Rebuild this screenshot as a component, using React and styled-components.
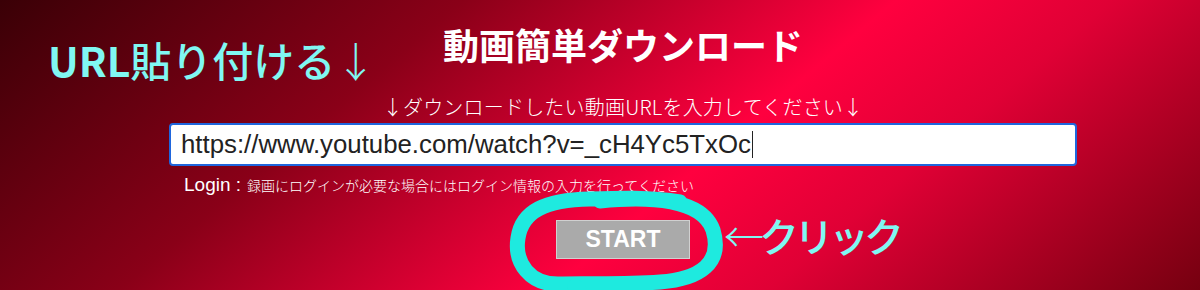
import styled, { createGlobalStyle } from "styled-components";

const GlobalStyle = createGlobalStyle`
  html, body {
    margin: 0;
    padding: 0;
  }
  body {
    font-family: "Liberation Sans", "Noto Sans CJK JP", sans-serif;
  }
`;

const Page = styled.div`
  position: relative;
  width: 1200px;
  height: 290px;
  overflow: hidden;
  background: linear-gradient(
    140deg,
    #3a0006 0%,
    #8a0018 30%,
    #ff003f 58%,
    #e00035 72%,
    #760010 100%
  );
`;

const Column = styled.main`
  display: flex;
  flex-direction: column;
  align-items: center;
  padding: 26px 0 0 46px;
`;

const Title = styled.h1`
  margin: 0;
  font-family: "Noto Sans CJK JP", sans-serif;
  font-weight: 700;
  font-size: 36px;
  line-height: 36px;
  color: #fff;
`;

const Hint = styled.p`
  margin: 34px 0 0;
  font-family: "Noto Sans CJK JP", sans-serif;
  font-weight: 300;
  font-size: 20px;
  line-height: 22px;
  letter-spacing: 0.2px;
  color: #fff;
`;

const UrlField = styled.div`
  box-sizing: border-box;
  width: 908px;
  height: 43px;
  margin-top: 5px;
  display: flex;
  align-items: center;
  padding: 0 10px;
  background: #fff;
  border: 2px solid #1f66dd;
  border-radius: 4px;
  font-family: "Liberation Sans", sans-serif;
  font-size: 25.8px;
  color: #222;
`;

const Caret = styled.span`
  display: inline-block;
  width: 1px;
  height: 27px;
  margin-left: 1px;
  background: #222;
`;

const LoginRow = styled.div`
  box-sizing: border-box;
  width: 908px;
  padding-left: 15px;
  margin-top: 8px;
  display: flex;
  align-items: baseline;
  gap: 6px;
  color: #fff;
`;

const LoginLabel = styled.span`
  font-family: "Liberation Sans", sans-serif;
  font-size: 19px;
`;

const LoginNote = styled.span`
  font-family: "Noto Sans CJK JP", sans-serif;
  font-size: 14px;
  font-weight: 300;
`;

const StartButton = styled.button`
  width: 134px;
  height: 39px;
  margin-top: 24px;
  background: #aaaaaa;
  border: 1px solid #d0d0d0;
  color: #fff;
  font-family: "Liberation Sans", sans-serif;
  font-weight: 700;
  font-size: 23px;
  cursor: pointer;
`;

const Note = styled.div`
  position: absolute;
  left: ${({ $x }) => $x}px;
  top: ${({ $y }) => $y}px;
  font-family: "Noto Sans CJK JP", sans-serif;
  font-size: ${({ $size }) => $size}px;
  letter-spacing: ${({ $tight }) => ($tight ? "-5px" : "0")};
  font-weight: 500;
  line-height: 1;
  color: #80f7f2;
  white-space: nowrap;
`;

const Strong = styled.b`
  font-weight: 700;
`;

const Thin = styled.span`
  font-weight: 300;
`;

const Scribble = styled.svg`
  position: absolute;
  left: 500px;
  top: 185px;
  overflow: visible;
  pointer-events: none;
`;

export default function App() {
  return (
    <>
      <GlobalStyle />
      <Page>
        <Column>
          <Title>動画簡単ダウンロード</Title>
          <Hint>↓ダウンロードしたい動画URLを入力してください↓</Hint>
          <UrlField>
            https://www.youtube.com/watch?v=_cH4Yc5TxOc
            <Caret />
          </UrlField>
          <LoginRow>
            <LoginLabel>Login :</LoginLabel>
            <LoginNote>
              録画にログインが必要な場合にはログイン情報の入力を行ってください
            </LoginNote>
          </LoginRow>
          <StartButton>START</StartButton>
        </Column>

        <Note $x={48} $y={39} $size={41}>
          <Strong>URL</Strong>貼り付ける<Thin>↓</Thin>
        </Note>
        <Note $x={724} $y={215} $size={40} $tight>
          <Thin>←</Thin>クリック
        </Note>
        <Scribble width="235" height="105" viewBox="0 0 235 105">
          <g
            fill="none"
            stroke="#1eeadf"
            strokeWidth="15"
            strokeLinecap="round"
            strokeLinejoin="round"
          >
            <path d="M100 16 C150 11 202 14 213 45 C223 78 200 94 160 97 C120 100 80 98 60 99 C30 100 14 78 18 53 C22 26 45 15 90 14 C120 13 150 12 180 17" />
            <path d="M75 101 Q81 106 84 116" />
          </g>
        </Scribble>
      </Page>
    </>
  );
}
